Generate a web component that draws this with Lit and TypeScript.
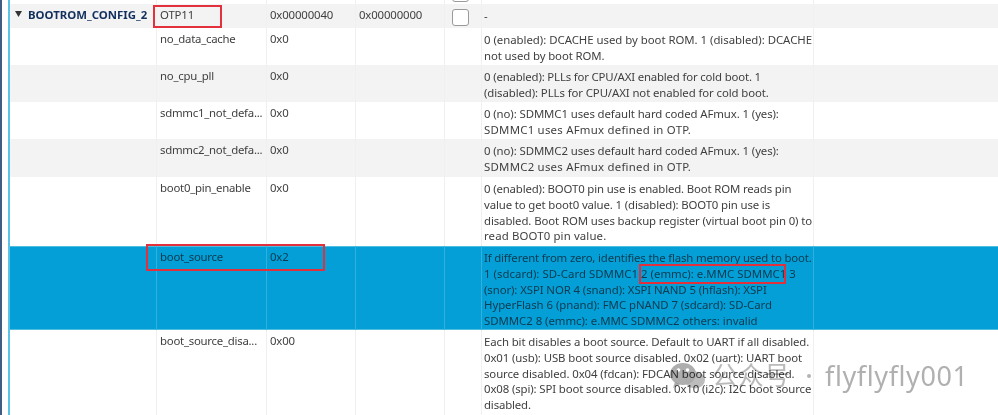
import { LitElement, html, css } from "lit";
import { customElement } from "lit/decorators.js";

type Line = [string, number];

interface Row {
  h: number;
  tone: "white" | "gray" | "blue";
  name: string;
  value: string;
  lines: Line[];
}

const ROWS: Row[] = [
  { h: 37, tone: "white", name: "no_data_cache", value: "0x0", lines: [["0 (enabled): DCACHE used by boot ROM. 1 (disabled): DCACHE", 7], ["not used by boot ROM.", 1]] },
  { h: 37, tone: "gray", name: "no_cpu_pll", value: "0x0", lines: [["0 (enabled): PLLs for CPU/AXI enabled for cold boot. 1", -1], ["(disabled): PLLs for CPU/AXI not enabled for cold boot.", 3]] },
  { h: 37, tone: "white", name: "sdmmc1_not_defa...", value: "0x0", lines: [["0 (no): SDMMC1 uses default hard coded AFmux. 1 (yes):", 3], ["SDMMC1 uses AFmux defined in OTP.", 13]] },
  { h: 38, tone: "gray", name: "sdmmc2_not_defa...", value: "0x0", lines: [["0 (no): SDMMC2 uses default hard coded AFmux. 1 (yes):", 3], ["SDMMC2 uses AFmux defined in OTP.", 13]] },
  { h: 69, tone: "white", name: "boot0_pin_enable", value: "0x0", lines: [["0 (enabled): BOOT0 pin use is enabled. Boot ROM reads pin", 0], ["value to get boot0 value. 1 (disabled): BOOT0 pin use is", 1], ["disabled. Boot ROM uses backup register (virtual boot pin 0) to", 3], ["read BOOT0 pin value.", 6]] },
  { h: 84, tone: "blue", name: "boot_source", value: "0x2", lines: [["If different from zero, identifies the flash memory used to boot.", -1], ["1 (sdcard): SD-Card SDMMC1 2 (emmc): e.MMC SDMMC1 3", 9], ["(snor): XSPI NOR 4 (snand): XSPI NAND 5 (hflash): XSPI", 3], ["HyperFlash 6 (pnand): FMC pNAND 7 (sdcard): SD-Card", 5], ["SDMMC2 8 (emmc): e.MMC SDMMC2 others: invalid", 5]] },
  { h: 85, tone: "white", name: "boot_source_disa...", value: "0x00", lines: [["Each bit disables a boot source. Default to UART if all disabled.", 3], ["0x01 (usb): USB boot source disabled. 0x02 (uart): UART boot", 3], ["source disabled. 0x04 (fdcan): FDCAN boot source disabled.", 3], ["0x08 (spi): SPI boot source disabled. 0x10 (i2c): I2C boot source", 2], ["disabled.", 0]] },
];

const tracking = ([text, delta]: Line) => `letter-spacing:${(-0.15 + delta / text.length).toFixed(3)}px`;

@customElement("app-root")
export class AppRoot extends LitElement {
  static styles = css`
    :host {
      display: block;
      position: relative;
      width: 998px;
      height: 415px;
      overflow: hidden;
      background: #fff;
      font-family: "Noto Sans", "Open Sans", sans-serif;
      font-size: 11.4px;
      letter-spacing: -0.15px;
      line-height: 15.6px;
      color: #3f3f3f;
    }
    .frame {
      display: grid;
      grid-template-columns: 2px 6px 2px 1fr;
      height: 415px;
      filter: blur(0.35px);
    }
    .edge { background: #3f5d82; }
    .gutter { background: #fff; }
    .accent { background: #5cc3e8; }
    .table { display: flex; flex-direction: column; min-width: 0; }
    .row {
      display: grid;
      grid-template-columns: 146px 110px 89px 89px 37px 332px 1fr;
      background: #fff;
    }
    .row.gray { background: #f3f3f3; }
    .row.blue {
      background: #049fd6;
      color: #0c3a50;
      box-shadow: inset 0 1px 0 #4fbce2, inset 0 -1px 0 #4fbce2;
    }
    .cell {
      border-left: 1px solid #f0f0f0;
      padding: 3px 3px 0;
      min-width: 0;
      white-space: nowrap;
    }
    .cell:first-child { border-left: 0; }
    .row.blue .cell { border-left-color: #2fb0dd; }
    .cell.name { letter-spacing: -0.25px; }
    .cell.desc { padding: 4.4px 0 0 2px; }
    .cell.last { padding: 0; }
    .line { display: block; }
    .spacer { height: 4px; }
    .spacer .cell { padding: 0; overflow: hidden; position: relative; }
    .head { height: 24px; background: #f3f3f3; }
    .head .cell { padding-top: 3px; }
    .head .cell.desc { padding-top: 4px; }
    .group {
      display: flex;
      align-items: flex-start;
      gap: 6px;
      font-weight: 700;
      color: #12305e;
    }
    .head .group { padding-top: 3px; padding-left: 5px; letter-spacing: 0; }
    .tri { width: 7px; height: 6px; flex: none; margin-top: 4px; }
    .head .check-cell { padding: 5px 0 0 7px; }
    .box {
      width: 15px;
      height: 15px;
      border: 1px solid #9a9a9a;
      border-radius: 3px;
      background: #fff;
      display: block;
    }
    .stub { position: absolute; left: 7px; top: -15px; }
    .mark {
      position: absolute;
      border: 2px solid #e2313c;
      box-sizing: border-box;
      pointer-events: none;
    }
    .m1 { left: 153px; top: 5px; width: 69px; height: 23px; }
    .m2 { left: 146px; top: 244px; width: 179px; height: 27px; }
    .m3 { left: 639px; top: 264px; width: 147px; height: 20px; }
    .wm {
      position: absolute;
      left: 669px;
      top: 359px;
      display: flex;
      align-items: center;
      color: #a9a9a9;
      pointer-events: none;
      letter-spacing: 0;
      filter: blur(0.35px);
      mix-blend-mode: multiply;
    }
    .wm svg { width: 37px; height: 28px; flex: none; }
    .wm .cn {
      font-family: "Noto Sans CJK SC", sans-serif;
      font-size: 26px;
      line-height: 26px;
      color: rgba(140, 140, 140, 0.6);
      margin: -4px 0 0 6px;
      width: 91px;
    }
    .wm .dot {
      width: 4px;
      height: 4px;
      border-radius: 50%;
      background: #b4b4b4;
      margin: 0 14px 0 4px;
    }
    .wm .id {
      font-size: 27px;
      line-height: 34px;
      letter-spacing: 0.6px;
      color: #b0b0b0;
    }
  `;

  render() {
    return html`
      <div class="frame">
        <div class="edge"></div>
        <div class="gutter"></div>
        <div class="accent"></div>
        <div class="table">
          <div class="row spacer">
            <div class="cell"></div>
            <div class="cell"></div>
            <div class="cell"></div>
            <div class="cell"></div>
            <div class="cell"><span class="box stub"></span></div>
            <div class="cell"></div>
            <div class="cell"></div>
          </div>
          <div class="row head">
            <div class="cell group">
              <svg class="tri" viewBox="0 0 7 6"><path d="M0 0h7L3.500 6z" fill="#333"></path></svg>
              <span>BOOTROM_CONFIG_2</span>
            </div>
            <div class="cell">OTP11</div>
            <div class="cell">0x00000040</div>
            <div class="cell">0x00000000</div>
            <div class="cell check-cell"><span class="box"></span></div>
            <div class="cell desc">-</div>
            <div class="cell last"></div>
          </div>
          ${ROWS.map(
            (r) => html`
              <div class="row ${r.tone}" style="height:${r.h}px">
                <div class="cell"></div>
                <div class="cell name">${r.name}</div>
                <div class="cell">${r.value}</div>
                <div class="cell"></div>
                <div class="cell"></div>
                <div class="cell desc">${r.lines.map((l) => html`<span class="line" style=${tracking(l)}>${l[0]}</span>`)}</div>
                <div class="cell last"></div>
              </div>
            `
          )}
        </div>
      </div>
      <div class="mark m1"></div>
      <div class="mark m2"></div>
      <div class="mark m3"></div>
      <div class="wm">
        <svg viewBox="0 0 37 28">
          <ellipse cx="14" cy="12" rx="13" ry="11" fill="#989898" fill-opacity="0.8"></ellipse>
          <path d="M6 20l-2 6 7-4z" fill="#989898" fill-opacity="0.8"></path>
          <circle cx="9.500" cy="8" r="1.800" fill="#fff"></circle>
          <circle cx="18.500" cy="8" r="1.800" fill="#fff"></circle>
          <ellipse cx="26" cy="18" rx="10" ry="8.500" fill="#acacac" fill-opacity="0.8"></ellipse>
        </svg>
        <span class="cn">公众号</span>
        <span class="dot"></span>
        <span class="id">flyflyfly001</span>
      </div>
    `;
  }
}
